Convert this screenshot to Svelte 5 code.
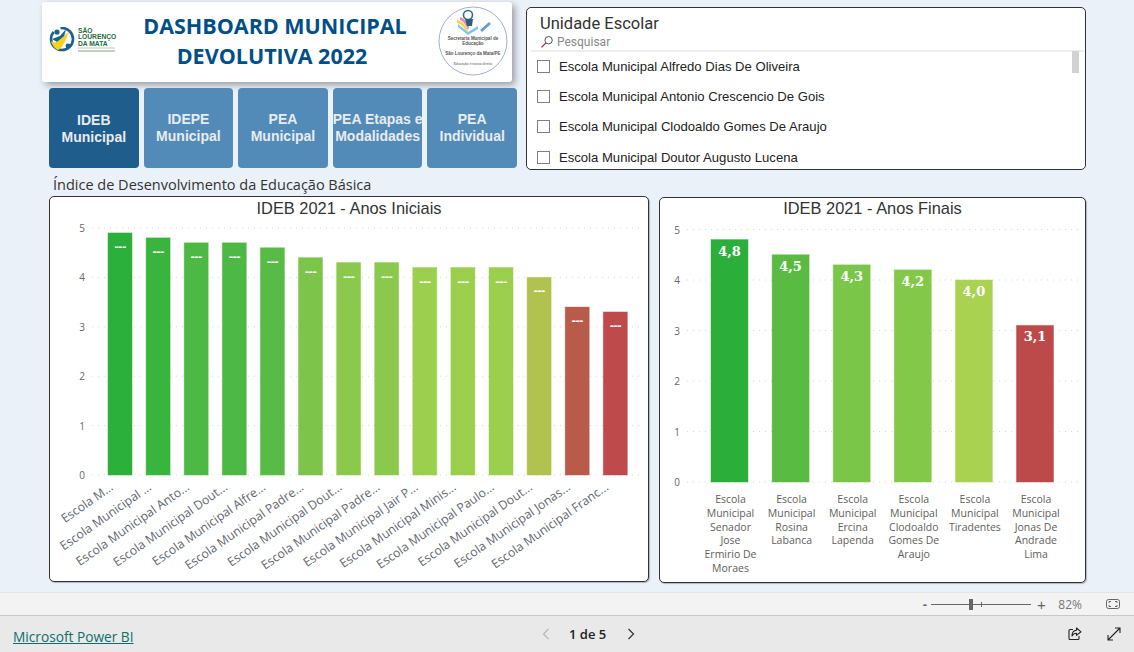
<script>
	const tabs = [
		{ lines: ['IDEB', 'Municipal'], active: true },
		{ lines: ['IDEPE', 'Municipal'] },
		{ lines: ['PEA', 'Municipal'] },
		{ lines: ['PEA Etapas e', 'Modalidades'] },
		{ lines: ['PEA', 'Individual'] }
	];

	const schools = [
		'Escola Municipal Alfredo Dias De Oliveira',
		'Escola Municipal Antonio Crescencio De Gois',
		'Escola Municipal Clodoaldo Gomes De Araujo',
		'Escola Municipal Doutor Augusto Lucena'
	];

	const iniciais = [
		{ v: 4.9, c: '#2bb03b', l: 'Escola M...' },
		{ v: 4.8, c: '#39b53e', l: 'Escola Municipal ...' },
		{ v: 4.7, c: '#4db844', l: 'Escola Municipal Anto...' },
		{ v: 4.7, c: '#4db844', l: 'Escola Municipal Dout...' },
		{ v: 4.6, c: '#58bb45', l: 'Escola Municipal Alfre...' },
		{ v: 4.4, c: '#7cc44a', l: 'Escola Municipal Padre...' },
		{ v: 4.3, c: '#8bc94c', l: 'Escola Municipal Dout...' },
		{ v: 4.3, c: '#8bc94c', l: 'Escola Municipal Padre...' },
		{ v: 4.2, c: '#9ccf4d', l: 'Escola Municipal Jair P...' },
		{ v: 4.2, c: '#9ccf4d', l: 'Escola Municipal Minis...' },
		{ v: 4.2, c: '#9ccf4d', l: 'Escola Municipal Paulo...' },
		{ v: 4.0, c: '#b2c24e', l: 'Escola Municipal Dout...' },
		{ v: 3.4, c: '#b95b4a', l: 'Escola Municipal Jonas...' },
		{ v: 3.3, c: '#be4a4b', l: 'Escola Municipal Franc...' }
	];

	const finais = [
		{ v: 4.8, c: '#2bae3a', l: ['Escola', 'Municipal', 'Senador', 'Jose', 'Ermirio De', 'Moraes'] },
		{ v: 4.5, c: '#5abb43', l: ['Escola', 'Municipal', 'Rosina', 'Labanca'] },
		{ v: 4.3, c: '#7ac648', l: ['Escola', 'Municipal', 'Ercina', 'Lapenda'] },
		{ v: 4.2, c: '#84c84a', l: ['Escola', 'Municipal', 'Clodoaldo', 'Gomes De', 'Araujo'] },
		{ v: 4.0, c: '#a8d250', l: ['Escola', 'Municipal', 'Tiradentes'] },
		{ v: 3.1, c: '#bd4a4b', l: ['Escola', 'Municipal', 'Jonas De', 'Andrade', 'Lima'] }
	];

	const ticks = [0, 1, 2, 3, 4, 5];
	const yLeft = (v) => 256 - 49.4 * v;
	const xLeft = (i) => 58 + 38.1 * i;
	const yRight = (v) => 262 - 50.5 * v;
	const xRight = (i) => 51 + 61.1 * i;
</script>

<div class="report">
	<main class="canvas">
		<section class="top">
			<div class="left-col">
				<header class="banner">
					<svg class="logo" width="70" height="30" viewBox="0 0 70 30">
						<g transform="translate(0,-2)">
							<circle cx="13" cy="14" r="11" fill="none" stroke="#15628f" stroke-width="2.6" stroke-dasharray="42 8" />
							<circle cx="8" cy="7" r="2.6" fill="#15628f" />
							<circle cx="19" cy="21" r="2.4" fill="#15628f" />
							<path d="M3 14 L11 11 L17 4 L15 12 L8 17 Z" fill="#15628f" />
							<path d="M2 16 C7 20 11 15 20 6 C17 15 13 24 9 25 C6 24 3 20 2 16 Z" fill="#f4d21f" />
						</g>
						<g class="logo-text">
							<text x="29" y="5.5">SÃO</text>
							<text x="29" y="12">LOURENÇO</text>
							<text x="29" y="18.5">DA MATA</text>
						</g>
						<rect x="29" y="20.5" width="37" height="1" fill="#b9cdb5" />
						<rect x="29" y="23.5" width="37" height="1" fill="#9a9a9a" />
					</svg>
					<h1>DASHBOARD MUNICIPAL<br /><span class="second">DEVOLUTIVA 2022</span></h1>
					<svg class="emblem" width="72" height="72" viewBox="0 0 72 72">
						<circle cx="36" cy="36" r="34" fill="#fff" stroke="#a3b0c8" stroke-width="1" />
						<path d="M21 19 L31 27 L41 21 L41 24 L31 30 L21 22 Z" fill="#7fc7e8" />
						<path d="M20 15 C25 16 29 20 31 26 L31 28 C28 23 24 19 20 18 Z" fill="#f2d64b" />
						<path d="M23 12 C27 13 30 17 32 22 L31 25 C29 20 26 16 23 15 Z" fill="#e58bb5" />
						<circle cx="31" cy="10" r="4.5" fill="none" stroke="#2a6d8f" stroke-width="1.6" />
						<path d="M28 14 L36 14 L35 21 L30 21 Z" fill="#2c5f78" />
						<path d="M43 25 L52 17 L54 19 L45 27 Z" fill="#6b9fd4" />
						<g class="emblem-text">
							<text x="36" y="35">Secretaria Municipal de</text>
							<text x="36" y="40">Educação</text>
							<text x="36" y="50">São Lourenço da Mata/PE</text>
							<text class="tiny" x="36" y="60">Educação é nosso direito</text>
						</g>
					</svg>
				</header>

				<nav class="tabs">
					{#each tabs as tab}
						<button class="tab" class:active={tab.active}>
							{tab.lines[0]}<br />{tab.lines[1]}
						</button>
					{/each}
				</nav>

				<h2 class="subtitle">Índice de Desenvolvimento da Educação Básica</h2>
			</div>

			<aside class="slicer">
				<div class="slicer-title">Unidade Escolar</div>
				<div class="search">
					<svg width="14" height="14" viewBox="0 0 14 14">
						<circle cx="8.6" cy="5.2" r="3.7" fill="none" stroke="#555" stroke-width="1" />
						<path d="M5.9 7.9 L1.5 12.4" stroke="#a4262c" stroke-width="1.2" />
					</svg>
					<span>Pesquisar</span>
				</div>
				<div class="list">
					<div class="scroll-thumb"></div>
					{#each schools as school}
						<label class="row">
							<span class="check"></span>
							<span>{school}</span>
						</label>
					{/each}
				</div>
			</aside>
		</section>

		<section class="charts">
			<article class="card wide">
				<div class="chart-title">IDEB 2021 - Anos Iniciais</div>
				<svg class="plot" width="598" height="362" viewBox="0 0 598 362">
					{#each ticks as t}
						<text class="axis" x="35" y={yLeft(t) + 4}>{t}</text>
						<line class="grid" x1="42" x2="591" y1={yLeft(t)} y2={yLeft(t)} />
					{/each}
					{#each iniciais as d, i}
						<rect class="bar" x={xLeft(i)} y={yLeft(d.v)} width="24" height={d.v * 49.4} fill={d.c} stroke={d.c} />
						<text class="dash" x={xLeft(i) + 12} y={yLeft(d.v) + 17}>---</text>
						<text class="cat-rot" transform="translate({xLeft(i) + 6},{270}) rotate(-35)">{d.l}</text>
					{/each}
				</svg>
			</article>

			<article class="card narrow">
				<div class="chart-title">IDEB 2021 - Anos Finais</div>
				<svg class="plot" width="425" height="362" viewBox="0 0 425 362">
					{#each ticks as t}
						<text class="axis" x="20" y={yRight(t) + 4}>{t}</text>
						<line class="grid" x1="27" x2="418" y1={yRight(t)} y2={yRight(t)} />
					{/each}
					{#each finais as d, i}
						<rect class="bar" x={xRight(i)} y={yRight(d.v)} width="37" height={d.v * 50.5} fill={d.c} stroke={d.c} />
						<text class="value" x={xRight(i) + 18.5} y={yRight(d.v) + 16}>{d.v.toFixed(1).replace('.', ',')}</text>
						{#each d.l as line, j}
							<text class="cat" x={xRight(i) + 19.5} y={283 + j * 13.8}>{line}</text>
						{/each}
					{/each}
				</svg>
			</article>
		</section>
	</main>

	<div class="zoom-bar">
		<span class="zoom-sign">-</span>
		<div class="slider">
			<span class="slider-mark"></span>
			<span class="slider-thumb"></span>
		</div>
		<span class="zoom-sign plus">+</span>
		<span class="zoom-value">82%</span>
		<svg class="fit" width="14" height="10" viewBox="0 0 14 10">
			<rect x="0.5" y="0.5" width="13" height="9" rx="2" fill="none" stroke="#666" />
			<path d="M3 4 V2.5 H5 M9 2.5 H11 V4 M11 6 V7.5 H9 M5 7.5 H3 V6" fill="none" stroke="#666" />
		</svg>
	</div>

	<footer class="footer">
		<a class="brand" href="#top">Microsoft Power BI</a>
		<div class="pager">
			<svg width="10" height="12" viewBox="0 0 10 12"><path d="M7.5 1 L2.5 6 L7.5 11" fill="none" stroke="#b8b8b8" stroke-width="1.2" /></svg>
			<span>1 de 5</span>
			<svg class="next" width="10" height="12" viewBox="0 0 10 12"><path d="M2.5 1 L7.5 6 L2.5 11" fill="none" stroke="#333" stroke-width="1.2" /></svg>
		</div>
		<div class="actions">
			<svg width="14" height="14" viewBox="0 0 14 14">
				<path d="M5 2.5 H2 A1 1 0 0 0 1 3.5 V11.5 A1 1 0 0 0 2 12.5 H10 A1 1 0 0 0 11 11.5 V9" fill="none" stroke="#222" stroke-width="1.1" />
				<path d="M8.5 1 L13 4.8 L8.5 8.4 V6.3 C6.5 6.3 5 7.2 4 9 C4 5.8 5.8 3.6 8.5 3.3 Z" fill="none" stroke="#222" stroke-width="1.1" stroke-linejoin="round" />
			</svg>
			<svg width="14" height="14" viewBox="0 0 14 14">
				<path d="M1 13 L13 1 M8 1 H13 V6 M1 8 V13 H6" fill="none" stroke="#222" stroke-width="1.1" />
			</svg>
		</div>
	</footer>
</div>

<style>
	:global(body) {
		margin: 0;
		background: #eaf1f9;
		overflow: hidden;
	}

	.report {
		width: 1134px;
		height: 652px;
		display: flex;
		flex-direction: column;
		font-family: 'Open Sans', 'Liberation Sans', sans-serif;
	}

	.canvas {
		height: 592px;
		box-sizing: border-box;
		background: #eaf1f9;
	}

	.top {
		display: flex;
		height: 196px;
	}

	.left-col {
		width: 484px;
		margin-left: 42px;
	}

	.banner {
		width: 470px;
		height: 80px;
		margin-top: 2px;
		box-sizing: border-box;
		display: flex;
		align-items: center;
		background: #fff;
		border-radius: 3px;
		box-shadow: 3px 3px 7px rgba(0, 0, 0, 0.35);
	}

	.logo {
		margin-left: 7px;
		flex: none;
	}

	.logo-text text {
		font: 700 6.7px 'Liberation Sans', sans-serif;
		fill: #1d6a38;
	}

	.banner h1 {
		flex: 1;
		margin: 0 5px 2px -1px;
		font-size: 21.5px;
		font-weight: 700;
		line-height: 30px;
		text-align: center;
		color: #004f88;
	}

	.second {
		display: inline-block;
		padding-right: 6px;
	}

	.emblem {
		flex: none;
		margin: 0 3px 3px 0;
	}

	.emblem-text text {
		font: 700 4.5px 'Liberation Sans', sans-serif;
		fill: #555;
		text-anchor: middle;
	}

	.emblem-text .tiny {
		font-size: 3.2px;
		fill: #888;
	}

	.tabs {
		display: flex;
		gap: 5px;
		margin: 6px 0 0 7px;
		width: 468px;
	}

	.tab {
		flex: 1;
		height: 80px;
		padding: 0;
		border: none;
		border-radius: 4px;
		background: #528bb8;
		color: #e8ebee;
		font: 700 14px/17px 'Liberation Sans', sans-serif;
		white-space: nowrap;
		overflow: hidden;
	}

	.tab.active {
		background: #1f5d8c;
		padding-top: 2px;
	}

	.subtitle {
		margin: 8px 0 0 11px;
		font-size: 14.5px;
		font-weight: 400;
		line-height: 18px;
		color: #333;
	}

	.slicer {
		width: 560px;
		height: 163px;
		margin-top: 7px;
		box-sizing: border-box;
		overflow: hidden;
		background: #fff;
		border: 1px solid #333;
		border-radius: 5px;
		padding: 6px 1px 0 4px;
	}

	.slicer-title {
		margin-left: 9px;
		font: 400 16.5px/19px Roboto, sans-serif;
		color: #333;
	}

	.search {
		display: flex;
		align-items: center;
		gap: 3px;
		height: 17px;
		margin-left: 9px;
		font: 400 12px Roboto, sans-serif;
		color: #888;
	}

	.list {
		position: relative;
		border-top: 2px solid #eee;
	}

	.scroll-thumb {
		position: absolute;
		top: -1px;
		right: 5px;
		width: 7px;
		height: 22px;
		background: #d2d2d2;
	}

	.scroll-thumb + .row {
		margin-top: -1px;
	}

	.row {
		display: flex;
		align-items: center;
		gap: 9px;
		height: 30.4px;
		margin-left: 6px;
		font: 400 13.1px 'Liberation Sans', sans-serif;
		color: #222;
	}

	.check {
		width: 11px;
		height: 11px;
		border: 1px solid #808080;
		background: #fff;
	}

	.charts {
		display: flex;
		gap: 10px;
		margin-left: 49px;
		align-items: flex-start;
	}

	.card {
		box-sizing: border-box;
		height: 386px;
		background: #fff;
		border: 1px solid #333;
		border-radius: 5px;
		overflow: hidden;
		box-shadow: 1px 1px 1px rgba(0, 0, 0, 0.25);
	}

	.wide {
		width: 600px;
	}

	.narrow {
		width: 427px;
		margin-top: 1px;
	}

	.chart-title {
		height: 22px;
		text-align: center;
		font: 400 16.4px/22px 'Liberation Sans', sans-serif;
		color: #333;
	}

	.narrow .chart-title {
		line-height: 20px;
	}

	.plot {
		display: block;
	}

	.axis {
		font: 400 10px 'Open Sans', sans-serif;
		fill: #666;
		text-anchor: end;
	}

	.grid {
		stroke: #d8d8d8;
		stroke-width: 1;
		stroke-dasharray: 1 5;
	}

	.bar {
		stroke-opacity: 0.45;
		stroke-width: 1;
	}

	.dash {
		font: 700 10.5px 'DejaVu Sans', sans-serif;
		letter-spacing: -0.6px;
		fill: #fff;
		text-anchor: middle;
	}

	.value {
		font: 700 13px 'DejaVu Serif', serif;
		fill: #fff;
		text-anchor: middle;
	}

	.cat-rot {
		font: 400 12.3px 'Open Sans', sans-serif;
		fill: #5f6670;
		text-anchor: end;
	}

	.cat {
		font: 400 10.5px 'Open Sans', sans-serif;
		fill: #605e5c;
		text-anchor: middle;
	}

	.zoom-bar {
		height: 23px;
		box-sizing: border-box;
		display: flex;
		align-items: center;
		justify-content: flex-end;
		background: #f3f3f3;
		border-top: 1px solid #e3e5ea;
		padding-right: 14px;
		color: #666;
	}

	.zoom-sign {
		font: 700 13px 'Liberation Sans', sans-serif;
		width: 9px;
		text-align: center;
	}

	.zoom-sign.plus {
		width: 12px;
		margin-left: 4px;
		font-weight: 400;
		font-size: 15px;
	}

	.slider {
		position: relative;
		width: 100px;
		height: 1px;
		margin-left: 2px;
		background: #666;
	}

	.slider-mark {
		position: absolute;
		left: 50px;
		top: -2px;
		width: 1px;
		height: 5px;
		background: #666;
	}

	.slider-thumb {
		position: absolute;
		left: 38px;
		top: -5px;
		width: 4px;
		height: 11px;
		background: #666;
	}

	.zoom-value {
		margin-left: 11px;
		font: 400 12px 'Open Sans', sans-serif;
		color: #777;
	}

	.fit {
		margin-left: 24px;
	}

	.footer {
		flex: 1;
		position: relative;
		display: flex;
		align-items: center;
		justify-content: space-between;
		background: #e9e9e9;
		border-top: 1px solid #c8c8c8;
		padding: 0 13px;
	}

	.brand {
		padding-top: 4px;
		font-size: 13.7px;
		color: #0f6e6b;
		text-decoration: underline;
	}

	.pager {
		position: absolute;
		left: 541px;
		display: flex;
		align-items: center;
		gap: 18px;
		font-size: 13px;
		font-weight: 600;
		color: #222;
	}

	.next {
		margin-left: 2px;
	}

	.actions {
		display: flex;
		gap: 25px;
	}
</style>
